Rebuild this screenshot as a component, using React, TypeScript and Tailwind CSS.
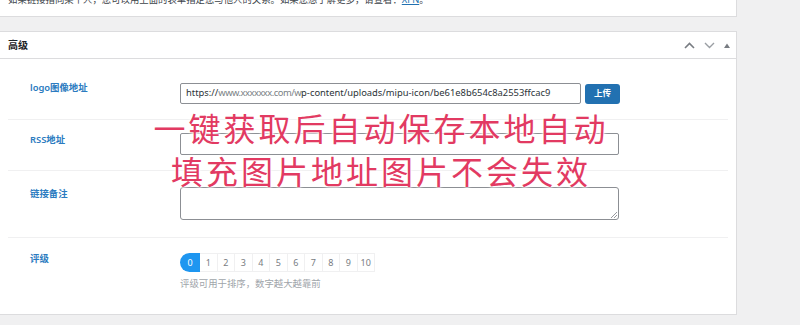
import React from "react";

const font = { fontFamily: '"Noto Sans", "Noto Sans CJK SC", sans-serif' };

export default function App() {
  const nums = [1, 2, 3, 4, 5, 6, 7, 8, 9, 10];
  return (
    <div
      className="relative w-[800px] h-[325px] overflow-hidden bg-[#f0f0f1] font-['Noto_Sans','Noto_Sans_CJK_SC',sans-serif]"
      style={font}
    >
      {/* top panel (cut off) */}
      <div className="w-[737px] h-[17px] bg-white border-b border-r border-[#dcdcde] overflow-hidden">
        <p className="-mt-[6px] pl-[8px] text-[9.4px] leading-[12px] text-[#3c434a] whitespace-nowrap">
          如果链接指向某个人，您可以用上面的表单指定您与他人的关系。如果您想了解更多，请查看：
          <span className="text-[#2271b1] underline">XFN</span>。
        </p>
      </div>

      {/* advanced panel */}
      <div className="mt-[14px] w-[737px] h-[284px] bg-white border-t border-r border-b border-[#dcdcde]">
        <div className="h-[27px] border-b border-[#dcdcde] flex items-center justify-between pl-[8px] pr-[6px]">
          <span className="text-[10px] font-bold text-[#1d2327] leading-none">高级</span>
          <div className="flex items-center gap-[9px] text-[#787c82]">
            <svg width="11" height="7" viewBox="0 0 11 7">
              <path d="M1 6 L5.5 1.5 L10 6" fill="none" stroke="#787c82" strokeWidth="1.6" />
            </svg>
            <svg width="11" height="7" viewBox="0 0 11 7">
              <path d="M1 1 L5.5 5.5 L10 1" fill="none" stroke="#9a9ea3" strokeWidth="1.4" />
            </svg>
            <svg width="6" height="5" viewBox="0 0 6 5">
              <path d="M0 5 L3 0.5 L6 5 Z" fill="#787c82" />
            </svg>
          </div>
        </div>

        <div className="px-[8px]">
          {/* row 1 */}
          <div className="h-[61px] flex items-start pt-[24px] border-b border-[#f0f0f1]">
            <div className="w-[172px] pl-[22px] -mt-[1px] text-[9.4px] leading-[12px] font-semibold text-[#2b7bc0]">
              logo图像地址
            </div>
            <div className="flex items-center gap-[4px]">
              <div className="w-[401px] h-[21px] border border-[#8c8f94] rounded-[2px] flex items-center pl-[5px] overflow-hidden whitespace-nowrap text-[9.4px] text-[#2c3338]">
                https://
                <span className="text-[#7a7f86] tracking-[-0.5px]">www.xxxxxxx.com/w</span>
                p-content/uploads/mipu-icon/be61e8b654c8a2553ffcac9
              </div>
              <div className="w-[35px] h-[20px] bg-[#2271b1] rounded-[3px] flex items-center justify-center text-[8.5px] text-white font-semibold">
                上传
              </div>
            </div>
          </div>

          {/* row 2 */}
          <div className="h-[51px] flex items-start pt-[13px] border-b border-[#f0f0f1]">
            <div className="w-[172px] pl-[22px] mt-[1px] text-[9.4px] leading-[12px] font-semibold text-[#2b7bc0]">
              RSS地址
            </div>
            <div className="w-[439px] h-[22px] border border-[#8c8f94] rounded-[2px]" />
          </div>

          {/* row 3 */}
          <div className="h-[67px] flex items-start pt-[16px] border-b border-[#f0f0f1]">
            <div className="w-[172px] pl-[22px] mt-[1px] text-[9.4px] leading-[12px] font-semibold text-[#2b7bc0]">
              链接备注
            </div>
            <div className="relative w-[439px] h-[33px] border border-[#8c8f94] rounded-[3px]">
              <svg className="absolute right-[1px] bottom-[1px]" width="6" height="6" viewBox="0 0 6 6">
                <path d="M0 6 L6 0 M3 6 L6 3" stroke="#8c8f94" strokeWidth="0.9" />
              </svg>
            </div>
          </div>

          {/* row 4 */}
          <div className="h-[75px] flex items-start pt-[15px]">
            <div className="w-[172px] pl-[22px] text-[9.4px] leading-[12px] font-semibold text-[#2b7bc0]">
              评级
            </div>
            <div>
              <div className="flex h-[19px] text-[9px] text-[#787c82]">
                <div className="w-[20px] h-[19px] bg-[#1e96f0] text-white rounded-l-full flex items-center justify-center">
                  0
                </div>
                {nums.map((n) => (
                  <div
                    key={n}
                    className="w-[17.5px] h-[19px] border-t border-b border-r border-[#f0f0f1] flex items-center justify-center"
                  >
                    {n}
                  </div>
                ))}
              </div>
              <div className="mt-[6px] text-[9.4px] leading-[12px] text-[#a0a5aa]">
                评级可用于排序，数字越大越靠前
              </div>
            </div>
          </div>
        </div>
      </div>

      {/* overlay annotation */}
      <div
        className="absolute left-0 top-[106px] w-[762px] text-center text-[32px] leading-[43px] tracking-[3px] text-[#e23a62] [text-shadow:0_0_2px_#fff,0_0_3px_#fff,0_0_4px_#fff]"
        style={{ fontFamily: '"Noto Sans CJK SC", sans-serif' }}
      >
        <div>一键获取后自动保存本地自动</div>
        <div>填充图片地址图片不会失效</div>
      </div>
    </div>
  );
}
